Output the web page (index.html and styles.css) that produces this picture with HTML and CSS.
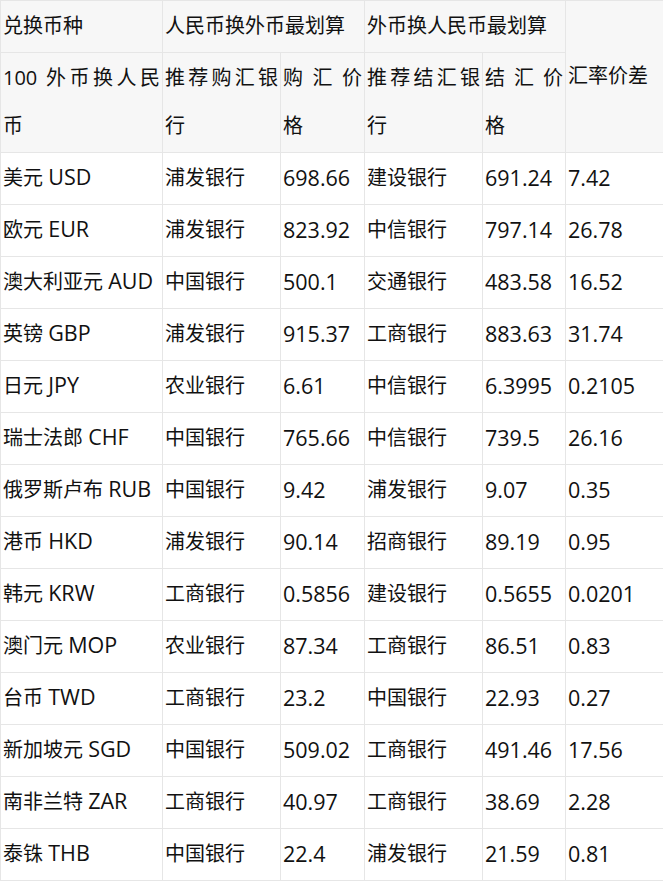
FILE: index.html
```html
<!DOCTYPE html>
<html lang="zh-CN">
<head>
<meta charset="utf-8">
<title>汇率</title>
<link rel="stylesheet" href="styles.css">
</head>
<body>
<table class="fx">
  <colgroup>
    <col class="c1"><col class="c2"><col class="c3"><col class="c4"><col class="c5"><col class="c6">
  </colgroup>
  <thead>
    <tr class="head">
      <td>兑换币种</td>
      <td colspan="2">人民币换外币最划算</td>
      <td colspan="2">外币换人民币最划算</td>
      <td rowspan="2" class="mid">汇率价差</td>
    </tr>
    <tr class="head">
      <td class="just">100 外币换人民币</td>
      <td class="just">推荐购汇银行</td>
      <td class="just">购汇价格</td>
      <td class="just">推荐结汇银行</td>
      <td class="just">结汇价格</td>
    </tr>
  </thead>
  <tbody>
    <tr><td>美元 <span class="lat">USD</span></td><td>浦发银行</td><td class="num">698.66</td><td>建设银行</td><td class="num">691.24</td><td class="num">7.42</td></tr>
    <tr><td>欧元 <span class="lat">EUR</span></td><td>浦发银行</td><td class="num">823.92</td><td>中信银行</td><td class="num">797.14</td><td class="num">26.78</td></tr>
    <tr><td>澳大利亚元 <span class="lat">AUD</span></td><td>中国银行</td><td class="num">500.1</td><td>交通银行</td><td class="num">483.58</td><td class="num">16.52</td></tr>
    <tr><td>英镑 <span class="lat">GBP</span></td><td>浦发银行</td><td class="num">915.37</td><td>工商银行</td><td class="num">883.63</td><td class="num">31.74</td></tr>
    <tr><td>日元 <span class="lat">JPY</span></td><td>农业银行</td><td class="num">6.61</td><td>中信银行</td><td class="num">6.3995</td><td class="num">0.2105</td></tr>
    <tr><td>瑞士法郎 <span class="lat">CHF</span></td><td>中国银行</td><td class="num">765.66</td><td>中信银行</td><td class="num">739.5</td><td class="num">26.16</td></tr>
    <tr><td>俄罗斯卢布 <span class="lat">RUB</span></td><td>中国银行</td><td class="num">9.42</td><td>浦发银行</td><td class="num">9.07</td><td class="num">0.35</td></tr>
    <tr><td>港币 <span class="lat">HKD</span></td><td>浦发银行</td><td class="num">90.14</td><td>招商银行</td><td class="num">89.19</td><td class="num">0.95</td></tr>
    <tr><td>韩元 <span class="lat">KRW</span></td><td>工商银行</td><td class="num">0.5856</td><td>建设银行</td><td class="num">0.5655</td><td class="num">0.0201</td></tr>
    <tr><td>澳门元 <span class="lat">MOP</span></td><td>农业银行</td><td class="num">87.34</td><td>工商银行</td><td class="num">86.51</td><td class="num">0.83</td></tr>
    <tr><td>台币 <span class="lat">TWD</span></td><td>工商银行</td><td class="num">23.2</td><td>中国银行</td><td class="num">22.93</td><td class="num">0.27</td></tr>
    <tr><td>新加坡元 <span class="lat">SGD</span></td><td>中国银行</td><td class="num">509.02</td><td>工商银行</td><td class="num">491.46</td><td class="num">17.56</td></tr>
    <tr><td>南非兰特 <span class="lat">ZAR</span></td><td>工商银行</td><td class="num">40.97</td><td>工商银行</td><td class="num">38.69</td><td class="num">2.28</td></tr>
    <tr><td>泰铢 <span class="lat">THB</span></td><td>中国银行</td><td class="num">22.4</td><td>浦发银行</td><td class="num">21.59</td><td class="num">0.81</td></tr>
  </tbody>
</table>
</body>
</html>
```

FILE: styles.css
```css
html, body {
  margin: 0;
  padding: 0;
  background: #ffffff;
}
body {
  font-family: "Open Sans", "Noto Sans CJK SC", sans-serif;
  font-size: 20px;
  color: #111111;
}
.fx {
  border-collapse: collapse;
  table-layout: fixed;
  width: 663px;
}
.c1 { width: 162px; }
.c2 { width: 118px; }
.c3 { width: 84px; }
.c4 { width: 118px; }
.c5 { width: 83px; }
.c6 { width: 98px; }
.fx td {
  border: 1px solid #e6e6e6;
  padding: 1px 2px 2px 2px;
  line-height: 48px;
  vertical-align: middle;
  text-align: left;
  white-space: normal;
  overflow: hidden;
}
.fx .head td {
  background: #f7f7f7;
}
.fx td.just {
  text-align: justify;
  text-justify: auto;
  vertical-align: top;
}
.fx td.num,
.fx .lat {
  font-size: 21.5px;
}
.fx .lat {
  line-height: 1;
}
```
